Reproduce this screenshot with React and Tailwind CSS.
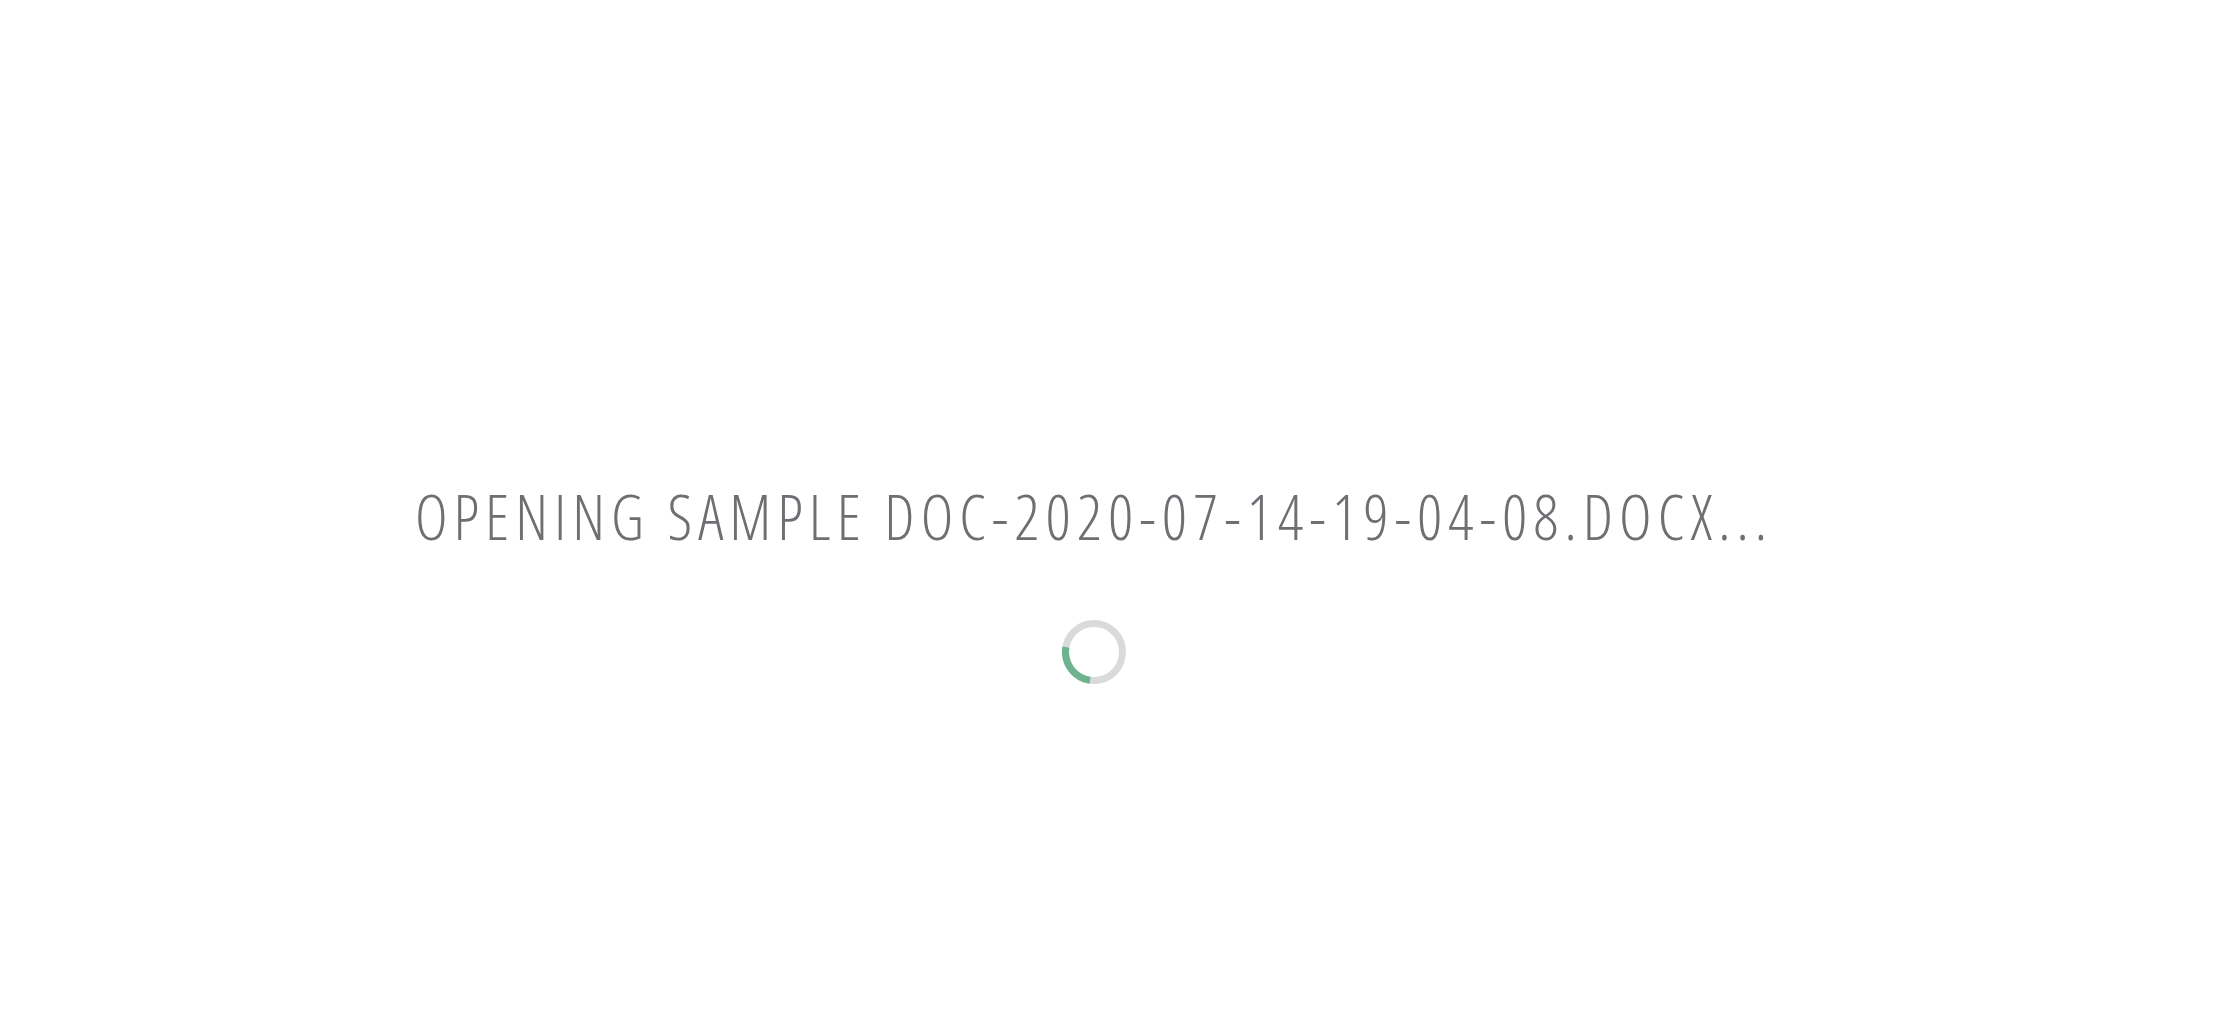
const FILE_NAME = 'Sample doc-2020-07-14-19-04-08.docx';

function Spinner() {
  // 64px ring, 7px stroke; green arc runs from just left of 6 o'clock up past 9 o'clock
  const r = 28.5;
  const c = 2 * Math.PI * r;
  const arc = c * 0.255;
  return (
    <svg width="64" height="64" viewBox="0 0 64 64" className="block">
      <circle cx="32" cy="32" r={r} fill="none" stroke="#d9dadb" strokeWidth="7" />
      <circle
        cx="32"
        cy="32"
        r={r}
        fill="none"
        stroke="#6cb38e"
        strokeWidth="7"
        strokeDasharray={`${arc} ${c}`}
        transform="rotate(98 32 32)"
      />
    </svg>
  );
}

export default function App() {
  return (
    <div className="min-h-screen bg-white flex flex-col items-center pt-[485px] pr-8">
      <p className="font-['Open_Sans',sans-serif] font-light font-stretch-condensed text-[62px] tracking-[6px] leading-none uppercase text-[#6e6f73] whitespace-nowrap">
        Opening {FILE_NAME}...
      </p>
      <div className="mt-[73px]">
        <Spinner />
      </div>
    </div>
  );
}
